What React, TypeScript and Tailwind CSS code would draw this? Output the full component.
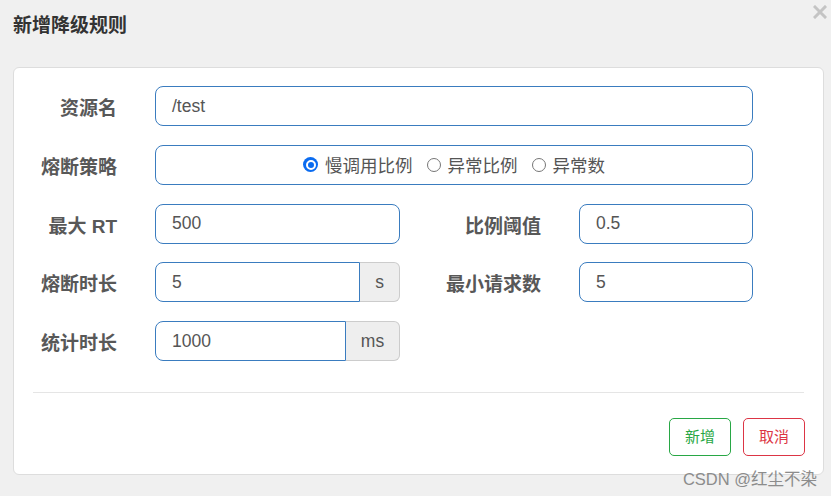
import React from 'react';

const font = { fontFamily: '"Liberation Sans", "Noto Sans CJK SC", sans-serif' };

const Label: React.FC<{ text: string; w: string }> = ({ text, w }) => (
    <div className={`${w} shrink-0 pr-[38px] pt-[5px] text-right text-[19px] font-bold text-[#585858] leading-none`}>{text}</div>
);

const Field: React.FC<{ value: string; w: string }> = ({ value, w }) => (
    <div className={`${w} h-[40px] flex items-center px-[16px] border border-[#3a7cbf] rounded-[8px] text-[17.5px] text-[#555]`}>{value}</div>
);

const AddonField: React.FC<{ value: string; unit: string; inputW: string; unitW: string }> = ({ value, unit, inputW, unitW }) => (
    <div className="flex h-[40px]">
        <div className={`${inputW} h-full flex items-center px-[16px] border border-[#3a7cbf] rounded-l-[8px] text-[17.5px] text-[#555]`}>{value}</div>
        <div className={`${unitW} h-full flex items-center justify-center bg-[#eeeeee] border border-l-0 border-[#cccccc] rounded-r-[6px] text-[17.5px] text-[#555]`}>{unit}</div>
    </div>
);

const Radio: React.FC<{ label: string; checked?: boolean }> = ({ label, checked }) => (
    <div className="flex items-center gap-[7px]">
        {checked ? (
            <span className="w-[15px] h-[15px] rounded-full bg-[#0b6cf0] flex items-center justify-center">
                <span className="w-[10px] h-[10px] rounded-full border-[2px] border-white bg-[#0b6cf0]" />
            </span>
        ) : (
            <span className="w-[14px] h-[14px] rounded-full border border-[#767676] bg-white" />
        )}
        <span className="text-[17.5px] text-[#555] pt-[3px]">{label}</span>
    </div>
);

const App: React.FC = () => {
    return (
        <div className="relative w-[831px] h-[496px] bg-[#f0f0f0] overflow-hidden" style={font}>
            <div className="h-[67px] pl-[13px] pt-[15px]">
                <h1 className="text-[19px] font-bold text-[#333] leading-[22px]">新增降级规则</h1>
            </div>
            <svg className="absolute right-[4px] top-[5px]" width="14" height="14" viewBox="0 0 14 14">
                <path d="M2 2 L12 12 M12 2 L2 12" stroke="#c4c4c4" strokeWidth="3" strokeLinecap="square" />
            </svg>

            <div className="ml-[13px] w-[811px] h-[408px] bg-white border border-[#dddddd] rounded-[6px] pt-[18px] flex flex-col">
                <div className="flex flex-col gap-[18.75px]">
                    <div className="flex items-center">
                        <Label text="资源名" w="w-[141px]" />
                        <Field value="/test" w="w-[598px]" />
                    </div>
                    <div className="flex items-center">
                        <Label text="熔断策略" w="w-[141px]" />
                        <div className="w-[598px] h-[40px] flex items-center justify-center gap-[14px] border border-[#3a7cbf] rounded-[8px]">
                            <Radio label="慢调用比例" checked />
                            <Radio label="异常比例" />
                            <Radio label="异常数" />
                        </div>
                    </div>
                    <div className="flex items-center">
                        <Label text="最大 RT" w="w-[141px]" />
                        <Field value="500" w="w-[245px]" />
                        <Label text="比例阈值" w="w-[179px]" />
                        <Field value="0.5" w="w-[174px]" />
                    </div>
                    <div className="flex items-center">
                        <Label text="熔断时长" w="w-[141px]" />
                        <AddonField value="5" unit="s" inputW="w-[205px]" unitW="w-[40px]" />
                        <Label text="最小请求数" w="w-[179px]" />
                        <Field value="5" w="w-[174px]" />
                    </div>
                    <div className="flex items-center">
                        <Label text="统计时长" w="w-[141px]" />
                        <AddonField value="1000" unit="ms" inputW="w-[191px]" unitW="w-[54px]" />
                    </div>
                </div>

                <div className="mx-[19px] mt-[31px] border-t border-[#e5e5e5]" />

                <div className="flex justify-end gap-[12px] mt-[25px] pr-[18px]">
                    <button className="w-[62px] h-[38px] border border-[#28a745] rounded-[5px] text-[15px] text-[#28a745] bg-white">新增</button>
                    <button className="w-[62px] h-[38px] border border-[#dc3545] rounded-[5px] text-[15px] text-[#dc3545] bg-white">取消</button>
                </div>
            </div>

            <span className="absolute right-[14px] bottom-[9px] text-[16.5px] text-[#8c8c8c] leading-none">CSDN @红尘不染</span>
        </div>
    );
};

export default App;
